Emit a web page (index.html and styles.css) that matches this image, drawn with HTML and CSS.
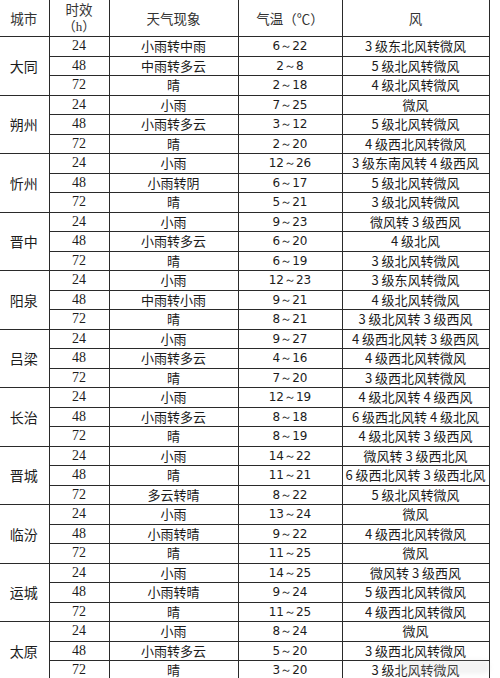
FILE: index.html
```html
<!DOCTYPE html>
<html lang="zh">
<head>
<meta charset="utf-8">
<link rel="stylesheet" href="styles.css">
</head>
<body>
<div class="wrap">
<table class="fc">
<colgroup><col class="c1"><col class="c2"><col class="c3"><col class="c4"><col class="c5"></colgroup>
<thead>
<tr class="head"><th>城市</th><th><span class="ln">时效</span><span class="ln hu">（h）</span></th><th>天气现象</th><th>气温（℃）</th><th>风</th></tr>
</thead>
<tbody>
<tr><td rowspan="3" class="city">大同</td><td class="h">24</td><td>小雨转中雨</td><td class="t">6～22</td><td>3 级东北风转微风</td></tr>
<tr><td class="h">48</td><td>中雨转多云</td><td class="t">2～8</td><td>5 级北风转微风</td></tr>
<tr><td class="h">72</td><td>晴</td><td class="t">2～18</td><td>4 级北风转微风</td></tr>
<tr><td rowspan="3" class="city">朔州</td><td class="h">24</td><td>小雨</td><td class="t">7～25</td><td>微风</td></tr>
<tr><td class="h">48</td><td>小雨转多云</td><td class="t">3～12</td><td>5 级北风转微风</td></tr>
<tr><td class="h">72</td><td>晴</td><td class="t">2～20</td><td>4 级西北风转微风</td></tr>
<tr><td rowspan="3" class="city">忻州</td><td class="h">24</td><td>小雨</td><td class="t">12～26</td><td>3 级东南风转 4 级西风</td></tr>
<tr><td class="h">48</td><td>小雨转阴</td><td class="t">6～17</td><td>5 级北风转微风</td></tr>
<tr><td class="h">72</td><td>晴</td><td class="t">5～21</td><td>3 级北风转微风</td></tr>
<tr><td rowspan="3" class="city">晋中</td><td class="h">24</td><td>小雨</td><td class="t">9～23</td><td>微风转 3 级西风</td></tr>
<tr><td class="h">48</td><td>小雨转多云</td><td class="t">6～20</td><td>4 级北风</td></tr>
<tr><td class="h">72</td><td>晴</td><td class="t">6～19</td><td>3 级北风转微风</td></tr>
<tr><td rowspan="3" class="city">阳泉</td><td class="h">24</td><td>小雨</td><td class="t">12～23</td><td>3 级东风转微风</td></tr>
<tr><td class="h">48</td><td>中雨转小雨</td><td class="t">9～21</td><td>4 级北风转微风</td></tr>
<tr><td class="h">72</td><td>晴</td><td class="t">8～21</td><td>3 级北风转 3 级西风</td></tr>
<tr><td rowspan="3" class="city">吕梁</td><td class="h">24</td><td>小雨</td><td class="t">9～27</td><td>4 级西北风转 3 级西风</td></tr>
<tr><td class="h">48</td><td>小雨转多云</td><td class="t">4～16</td><td>4 级西北风转微风</td></tr>
<tr><td class="h">72</td><td>晴</td><td class="t">7～20</td><td>3 级西北风转微风</td></tr>
<tr><td rowspan="3" class="city">长治</td><td class="h">24</td><td>小雨</td><td class="t">12～19</td><td>4 级北风转 4 级西风</td></tr>
<tr><td class="h">48</td><td>小雨转多云</td><td class="t">8～18</td><td>6 级西北风转 4 级北风</td></tr>
<tr><td class="h">72</td><td>晴</td><td class="t">8～19</td><td>4 级北风转 3 级西风</td></tr>
<tr><td rowspan="3" class="city">晋城</td><td class="h">24</td><td>小雨</td><td class="t">14～22</td><td>微风转 3 级西北风</td></tr>
<tr><td class="h">48</td><td>晴</td><td class="t">11～21</td><td>6 级西北风转 3 级西北风</td></tr>
<tr><td class="h">72</td><td>多云转晴</td><td class="t">8～22</td><td>5 级北风转微风</td></tr>
<tr><td rowspan="3" class="city">临汾</td><td class="h">24</td><td>小雨</td><td class="t">13～24</td><td>微风</td></tr>
<tr><td class="h">48</td><td>小雨转晴</td><td class="t">9～22</td><td>4 级西北风转微风</td></tr>
<tr><td class="h">72</td><td>晴</td><td class="t">11～25</td><td>微风</td></tr>
<tr><td rowspan="3" class="city">运城</td><td class="h">24</td><td>小雨</td><td class="t">14～25</td><td>微风转 3 级西风</td></tr>
<tr><td class="h">48</td><td>小雨转晴</td><td class="t">9～24</td><td>5 级西北风转微风</td></tr>
<tr><td class="h">72</td><td>晴</td><td class="t">11～25</td><td>4 级西北风转微风</td></tr>
<tr><td rowspan="3" class="city">太原</td><td class="h">24</td><td>小雨</td><td class="t">8～24</td><td>微风</td></tr>
<tr><td class="h">48</td><td>小雨转多云</td><td class="t">5～20</td><td>3 级西北风转微风</td></tr>
<tr><td class="h">72</td><td>晴</td><td class="t">3～20</td><td>3 级北风转微风</td></tr>
</tbody>
</table>
<div class="mark"></div>
</div>
</body>
</html>
```

FILE: styles.css
```css
html, body {
  margin: 0;
  padding: 0;
  background: #fff;
}
.wrap {
  position: relative;
  width: 500px;
  height: 678px;
  overflow: hidden;
}
.fc {
  border-collapse: collapse;
  table-layout: fixed;
  width: 490px;
  margin-left: -1px;
  font-family: "Noto Sans CJK SC", "Noto Sans", sans-serif;
  font-size: 13px;
  color: #1c1c1c;
}
.c1 { width: 50px; }
.c2 { width: 60px; }
.c3 { width: 129px; }
.c4 { width: 104px; }
.c5 { width: 147px; }
.fc th, .fc td {
  border: 1px solid #2a2a2a;
  padding: 0;
  text-align: center;
  vertical-align: middle;
  line-height: 18px;
  white-space: nowrap;
  overflow: hidden;
}
.fc tr:first-child th { border-top: none; }
.fc th:first-child, .fc td.city { border-left: none; }
.head th {
  height: 35px;
  font-weight: normal;
  font-size: 13.5px;
  color: #333;
}
.ln {
  display: block;
  line-height: 18px;
}
.hu {
  font-family: "Liberation Serif", "Noto Sans CJK SC", serif;
  font-size: 13px;
}
.fc tbody tr { height: 19.5px; }
.city { font-size: 14px; }
.h {
  font-family: "Liberation Serif", serif;
  font-size: 14px;
}
.t {
  font-family: "DejaVu Sans", "Noto Sans", sans-serif;
  font-size: 12px;
}
.mark {
  position: absolute;
  left: 398px;
  bottom: 4px;
  width: 92px;
  height: 14px;
  border-radius: 7px;
  background: rgba(200, 200, 200, 0.22);
  filter: blur(2px);
}
```
